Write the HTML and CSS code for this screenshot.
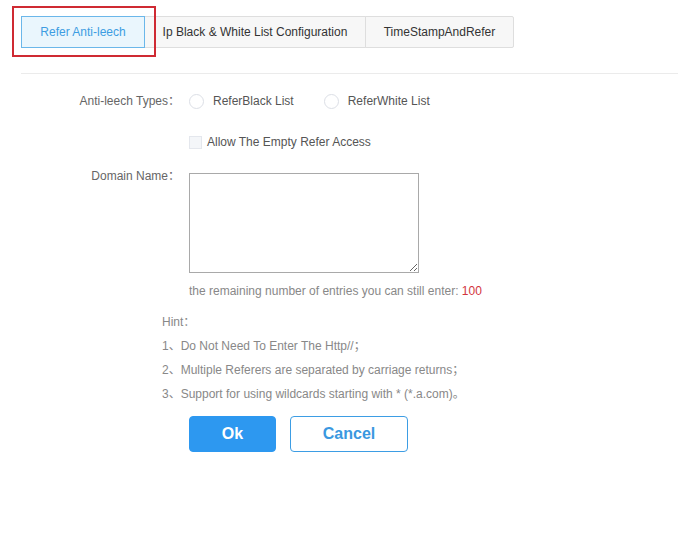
FILE: index.html
```html
<!DOCTYPE html>
<html>

<head>
    <meta name="viewport" content="width=device-width, initial-scale=1">
    <meta charset="utf-8">
    <link rel="stylesheet" href="styles.css">
</head>

<body>

    <div class="page">
        <div class="tabs">
            <div class="tab tab-first active">Refer Anti-leech</div>
            <div class="tab tab-second">Ip Black &amp; White List Configuration</div>
            <div class="tab tab-third">TimeStampAndRefer</div>
            <div class="mark"></div>
        </div>

        <div class="divider"></div>

        <div class="form">
            <div class="row row-types">
                <div class="label">Anti-leech Types：</div>
                <label class="radio"><span class="circle"></span>ReferBlack List</label>
                <label class="radio radio-second"><span class="circle"></span>ReferWhite List</label>
            </div>

            <div class="row row-check">
                <div class="label"></div>
                <label class="check"><span class="box"></span>Allow The Empty Refer Access</label>
            </div>

            <div class="row row-domain">
                <div class="label label-top">Domain Name：</div>
                <textarea class="domains"></textarea>
            </div>

            <div class="remain">the remaining number of entries you can still enter: <span class="count">100</span></div>

            <div class="hint">
                <div>Hint：</div>
                <div>1、Do Not Need To Enter The Http//；</div>
                <div>2、Multiple Referers are separated by carriage returns；</div>
                <div>3、Support for using wildcards starting with * (*.a.com)。</div>
            </div>

            <div class="buttons">
                <button class="btn btn-ok">Ok</button>
                <button class="btn btn-cancel">Cancel</button>
            </div>
        </div>
    </div>

</body>

</html>
```

FILE: styles.css
```css
* {
    box-sizing: border-box;
}

body {
    margin: 0;
    font-family: "Liberation Sans", Arial, "Noto Sans CJK SC", sans-serif;
    font-size: 12px;
    color: #666;
    background: #fff;
}

.page {
    padding: 16px 0 0 21px;
}

.tabs {
    display: flex;
    position: relative;
}

.tab {
    height: 32px;
    display: flex;
    align-items: center;
    justify-content: center;
    border: 1px solid #dedede;
    background: #f7f7f7;
    color: #333;
}

.tab + .tab {
    margin-left: -1px;
}

.tab-first {
    width: 124px;
}

.tab-second {
    width: 222px;
}

.tab-third {
    width: 149px;
    border-radius: 0 2px 2px 0;
}

.tab.active {
    background: #eaf6fd;
    border-color: #6bb7ea;
    color: #3d9de2;
    position: relative;
    z-index: 1;
}

/* red annotation frame round the active tab */
.mark {
    position: absolute;
    left: -9px;
    top: -10px;
    width: 144px;
    height: 51px;
    border: 2px solid #cf2a33;
    z-index: 2;
}

.divider {
    height: 1px;
    background: #ebebeb;
    margin-top: 25px;
}

.row {
    display: flex;
    align-items: center;
}

.label {
    width: 168px;
    padding-right: 9px;
    text-align: right;
    flex: none;
    line-height: 16px;
}

.row-types {
    margin-top: 19px;
    height: 16px;
}

.radio {
    display: flex;
    align-items: center;
    color: #555;
}

.radio-second {
    margin-left: 30px;
}

.circle {
    width: 15px;
    height: 15px;
    border: 1px solid #dcdfe6;
    border-radius: 50%;
    background: #fff;
    margin-right: 9px;
}

.row-check {
    margin-top: 26px;
    height: 14px;
}

.check {
    display: flex;
    align-items: center;
    color: #555;
}

.box {
    width: 13px;
    height: 13px;
    border: 1px solid #e4e7ed;
    background: #f4f6f9;
    margin-right: 5px;
}

.row-domain {
    margin-top: 19px;
    align-items: flex-start;
}

.domains {
    width: 230px;
    height: 100px;
    margin: 5px 0 0 0;
    border: 1px solid #a9a9a9;
    padding: 2px;
    font-family: inherit;
    font-size: 12px;
}

.remain {
    margin: 9px 0 0 168px;
    line-height: 18px;
    color: #888;
}

.count {
    color: #d2343c;
}

.hint {
    margin: 10px 0 0 141px;
    line-height: 24px;
    color: #888;
}

.buttons {
    display: flex;
    gap: 14px;
    margin: 10px 0 0 168px;
}

.btn {
    height: 36px;
    border-radius: 4px;
    font-family: "Liberation Sans", Arial, sans-serif;
    font-size: 16px;
    font-weight: bold;
    cursor: pointer;
}

.btn-ok {
    width: 87px;
    border: 1px solid #2d98f0;
    background: #2d98f0;
    color: #fff;
}

.btn-cancel {
    width: 118px;
    border: 1px solid #3d9de4;
    background: #fff;
    color: #3a98e0;
}
```
